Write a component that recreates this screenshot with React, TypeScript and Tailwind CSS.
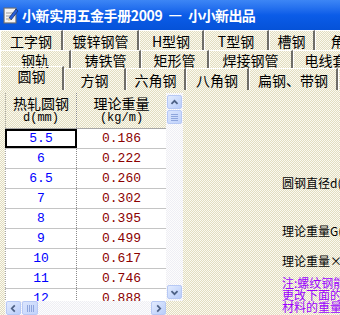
import React from 'react';

const cjk = "font-['Noto_Sans_CJK_SC',sans-serif]";
const mono = "font-['Liberation_Mono','Noto_Sans_CJK_SC',monospace]";
const dither =
  'bg-[image:repeating-conic-gradient(#e2ddc0_0_25%,#fbfaf0_0_50%)] bg-[length:2px_2px]';
const track =
  'bg-[image:repeating-conic-gradient(#eeeef4_0_25%,#fdfdfd_0_50%)] bg-[length:2px_2px]';

const tabRows: { label: string; w: number; active?: boolean }[][] = [
  [
    { label: '工字钢', w: 63 },
    { label: '镀锌钢管', w: 76 },
    { label: 'H型钢', w: 65 },
    { label: 'T型钢', w: 65 },
    { label: '槽钢', w: 46 },
    { label: '角钢', w: 60 },
  ],
  [
    { label: '钢轨', w: 71 },
    { label: '铸铁管', w: 70 },
    { label: '矩形管', w: 68 },
    { label: '焊接钢管', w: 84 },
    { label: '电线套管', w: 80 },
  ],
  [
    { label: '圆钢', w: 64, active: true },
    { label: '方钢', w: 62 },
    { label: '六角钢', w: 60 },
    { label: '八角钢', w: 63 },
    { label: '扁钢、带钢', w: 89 },
    { label: '钢板', w: 60 },
  ],
];

const rows = [
  ['5.5', '0.186'],
  ['6', '0.222'],
  ['6.5', '0.260'],
  ['7', '0.302'],
  ['8', '0.395'],
  ['9', '0.499'],
  ['10', '0.617'],
  ['11', '0.746'],
  ['12', '0.888'],
];

function AppIcon() {
  return (
    <svg width="16" height="18" viewBox="0 0 16 18">
      <rect x="1" y="2" width="12" height="15" fill="#d8d8d8" stroke="#6d6d6d" />
      <rect x="2" y="3" width="10" height="13" fill="#f4f4f4" />
      <path d="M3 7h7M3 10h7M3 13h5" stroke="#9a9a9a" />
      <path d="M6 12 L13 3 L15 5 L8 14 Z" fill="#2a5fd8" stroke="#14306e" strokeWidth="0.8" />
      <path d="M6 12 L5 15 L8 14 Z" fill="#f0d090" />
    </svg>
  );
}

function ScrollButton({ dir }: { dir: 'up' | 'down' | 'left' | 'right' }) {
  const paths = {
    up: 'M4 9 L7.5 5.5 L11 9',
    down: 'M4 6 L7.5 9.5 L11 6',
    left: 'M9 4 L5.5 7.5 L9 11',
    right: 'M6 4 L9.5 7.5 L6 11',
  };
  return (
    <div className="w-[15px] h-[14px] rounded-[2px] border border-[#b7c9f5] bg-gradient-to-br from-[#e2ebfe] to-[#b9cdfa] flex items-center justify-center">
      <svg width="15" height="15" viewBox="0 0 15 15">
        <path d={paths[dir]} fill="none" stroke="#4d6185" strokeWidth="2" />
      </svg>
    </div>
  );
}

function Thumb({ vertical }: { vertical?: boolean }) {
  return (
    <div
      className={`rounded-[2px] border border-[#b7c9f5] bg-gradient-to-br from-[#dbe5fd] to-[#c1d3fb] flex items-center justify-center ${
        vertical ? 'w-[15px] h-[14px] flex-col gap-[1px]' : 'w-[16px] h-[14px] flex-row gap-[1px]'
      }`}
    >
      {[0, 1, 2, 3].map((i) => (
        <div
          key={i}
          className={vertical ? 'w-[7px] h-px bg-[#8ea5dc]' : 'w-px h-[7px] bg-[#8ea5dc]'}
        />
      ))}
    </div>
  );
}

export default function App() {
  return (
    <div className={`w-[340px] h-[315px] overflow-hidden flex flex-col ${dither} ${cjk}`}>
      {/* Title bar */}
      <div className="h-[30px] shrink-0 flex items-center pl-[3px] bg-gradient-to-b from-[#3d86f5] via-[#0b5ce8] to-[#0552d8] text-white font-bold text-[14px] whitespace-nowrap">
        <AppIcon />
        <span className="ml-[3px] tracking-[-0.4px]">小新实用五金手册2009</span>
        <span className="mx-[7px] font-['Liberation_Sans',sans-serif] text-[12px]">—</span>
        <span className="tracking-[-0.6px]">小小新出品</span>
      </div>

      {/* Tab rows */}
      <div className="shrink-0 flex flex-col text-[14px] text-black">
        {tabRows.map((row, ri) => (
          <div
            key={ri}
            className={`flex whitespace-nowrap ${ri === 0 ? 'h-[20px]' : ri === 1 ? 'h-[18px]' : 'h-[22px]'}`}
          >
            {row.map((t) => (
              <div
                key={t.label}
                style={{ width: t.w }}
                className={`shrink-0 flex items-center justify-center border-t border-l border-t-white border-l-white border-r-2 border-r-[#6e6d68] leading-none ${
                  t.active ? '-mt-[2px] h-[24px] pb-[5px]' : 'h-full'
                }`}
              >
                {t.label}
              </div>
            ))}
          </div>
        ))}
      </div>

      {/* Content */}
      <div className="flex-1 flex pt-[3px] min-h-0">
        {/* Grid */}
        <div className="ml-[5px] w-[178px] flex flex-col shrink-0">
          <div className="flex h-[208px]">
            <div className="w-[161px] flex flex-col overflow-hidden bg-white">
              <div className={`flex h-[36px] shrink-0 ${dither} border-b border-[#a8a8a8]`}>
                <div className="w-[72px] flex flex-col items-center justify-center border-r border-dotted border-[#8a8a8a] border-l border-l-[#a8a8a8] leading-[15px] text-[14px]">
                  <span>热轧圆钢</span>
                  <span className={`${mono} text-[12px]`}>d(mm)</span>
                </div>
                <div className="flex-1 flex flex-col items-center justify-center leading-[15px] text-[14px]">
                  <span>理论重量</span>
                  <span className={`${mono} text-[12px]`}>(kg/m)</span>
                </div>
              </div>
              {rows.map(([d, g], i) => (
                <div key={d} className={`flex h-[20px] shrink-0 border-b border-[#c4c4c4] ${mono} text-[13px]`}>
                  <div
                    className={`w-[72px] flex items-center justify-center text-[#0000ff] ${
                      i === 0
                        ? 'border-2 border-black'
                        : 'border-r border-dotted border-[#8a8a8a] border-l border-l-[#a8a8a8]'
                    }`}
                  >
                    {d}
                  </div>
                  <div className="flex-1 flex items-center justify-center text-[#8b0000]">{g}</div>
                </div>
              ))}
            </div>
            {/* Vertical scrollbar */}
            <div className={`w-[17px] flex flex-col justify-between items-end ${track} py-[2px] pr-px`}>
              <div className="flex flex-col gap-[1px]">
                <ScrollButton dir="up" />
                <Thumb vertical />
              </div>
              <ScrollButton dir="down" />
            </div>
          </div>
          {/* Horizontal scrollbar */}
          <div className={`w-[161px] h-[14px] flex justify-between ${track} pl-px`}>
            <div className="flex gap-[1px]">
              <ScrollButton dir="left" />
              <Thumb />
            </div>
            <ScrollButton dir="right" />
          </div>
        </div>

        {/* Right panel */}
        <div className="ml-[99px] flex-1 min-w-0 overflow-hidden text-[12px] text-black whitespace-nowrap">
          <div className="mt-[83px] leading-[14px]">圆钢直径d(mm)</div>
          <div className="mt-[34px] leading-[14px]">理论重量G(kg/m)</div>
          <div className="mt-[16px] leading-[14px]">理论重量×长度</div>
          <div className="mt-[9px] leading-[12px] text-[#9a00ff]">
            <div>注:螺纹钢能按此计算</div>
            <div>更改下面的数值</div>
            <div>材料的重量比</div>
          </div>
        </div>
      </div>
    </div>
  );
}
